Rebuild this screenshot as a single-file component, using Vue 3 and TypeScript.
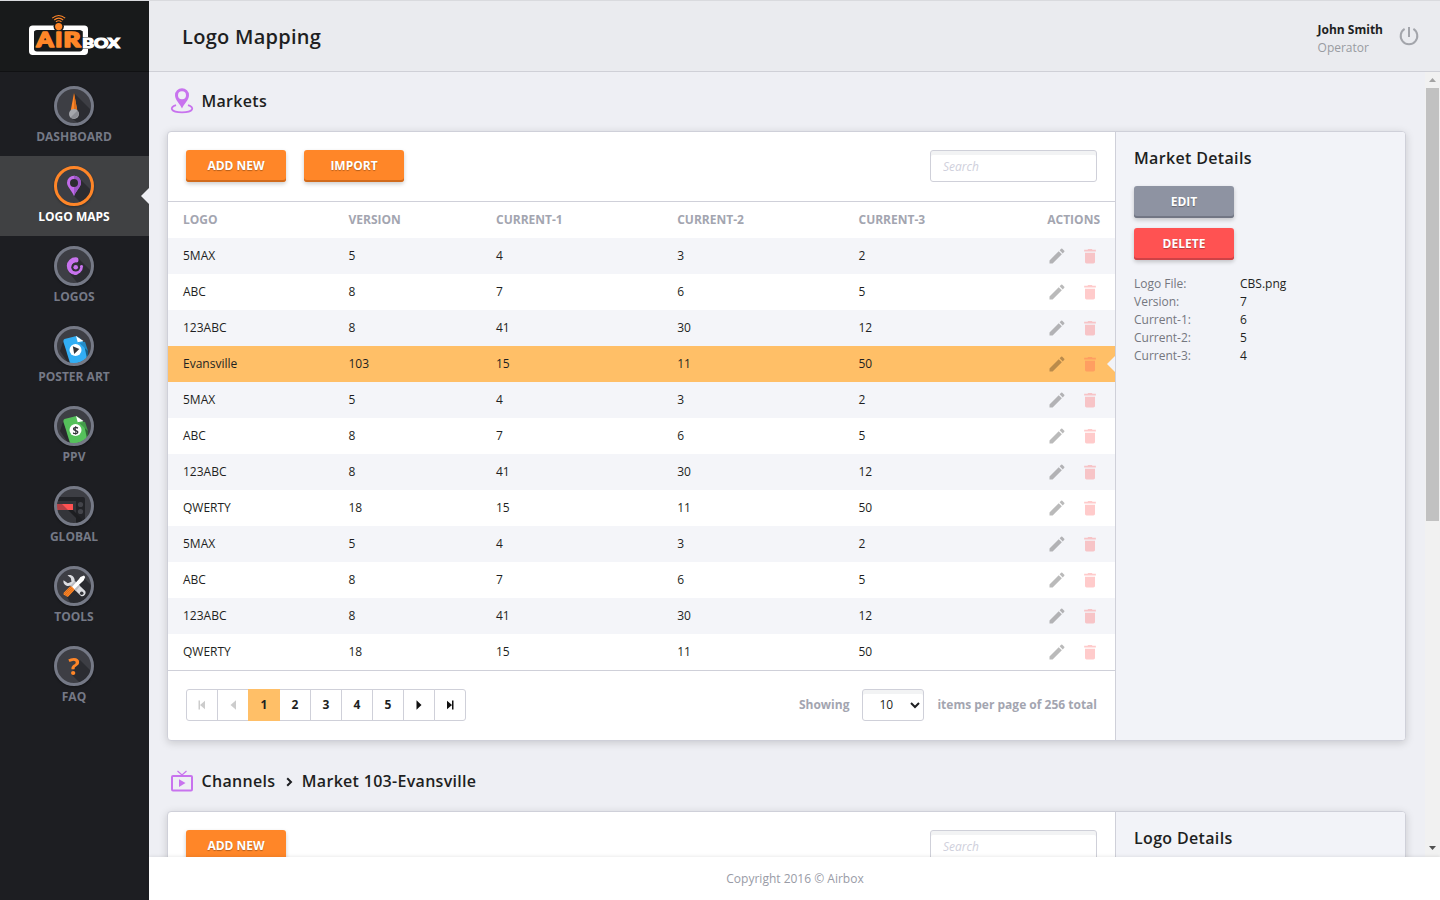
<script setup lang="ts">
import { ref } from 'vue'

interface NavItem { id: string; label: string }
interface Row { logo: string; version: number; c1: number; c2: number; c3: number }

const nav: NavItem[] = [
  { id: 'dashboard', label: 'DASHBOARD' },
  { id: 'maps', label: 'LOGO MAPS' },
  { id: 'logos', label: 'LOGOS' },
  { id: 'poster', label: 'POSTER ART' },
  { id: 'ppv', label: 'PPV' },
  { id: 'global', label: 'GLOBAL' },
  { id: 'tools', label: 'TOOLS' },
  { id: 'faq', label: 'FAQ' },
]
const active = ref('maps')

const max: Row = { logo: '5MAX', version: 5, c1: 4, c2: 3, c3: 2 }
const abc: Row = { logo: 'ABC', version: 8, c1: 7, c2: 6, c3: 5 }
const num: Row = { logo: '123ABC', version: 8, c1: 41, c2: 30, c3: 12 }
const evans: Row = { logo: 'Evansville', version: 103, c1: 15, c2: 11, c3: 50 }
const qwerty: Row = { logo: 'QWERTY', version: 18, c1: 15, c2: 11, c3: 50 }
const rows: Row[] = [max, abc, num, evans, max, abc, num, qwerty, max, abc, num, qwerty]
const selected = ref(3)
const page = ref(1)
const perPage = ref('10')

const details: [string, string][] = [
  ['Logo File:', 'CBS.png'],
  ['Version:', '7'],
  ['Current-1:', '6'],
  ['Current-2:', '5'],
  ['Current-3:', '4'],
]
</script>

<template>
  <div class="app">
    <aside class="sidebar">
      <div class="brand">
        <svg width="94" height="44" viewBox="0 0 94 44">
          <rect x="3.7" y="14.2" width="53.6" height="24" rx="1" fill="none" stroke="#fff" stroke-width="5.4" stroke-linejoin="round" />
          <rect x="6" y="16" width="48.5" height="21.5" rx="3" fill="#181a1b" />
          <circle cx="30.7" cy="12.6" r="5.2" fill="#181a1b" />
          <circle cx="30.7" cy="12.6" r="3.6" fill="#ff8628" />
          <path d="M24.2 4.2Q30.7 -1.2 37.2 4.2M26.2 6Q30.7 2.2 35.2 6M27.9 7.8Q30.7 5.8 33.5 7.8" fill="none" stroke="#ff8628" stroke-width="1.1" />
          <g class="logo-air">
            <text x="8.6" y="33.4" textLength="17" lengthAdjust="spacingAndGlyphs">A</text>
            <text x="27.2" y="33.4" textLength="7" lengthAdjust="spacingAndGlyphs">I</text>
            <text x="35.4" y="33.4" textLength="17" lengthAdjust="spacingAndGlyphs">R</text>
          </g>
          <rect x="54" y="23" width="7" height="12" fill="#181a1b" />
          <text class="logo-box" x="54.3" y="34" textLength="37.4" lengthAdjust="spacingAndGlyphs">BOX</text>
        </svg>
      </div>
      <nav class="nav">
        <a v-for="item in nav" :key="item.id" class="nav-item" :class="{ active: item.id === active }" @click="active = item.id">
          <svg class="nav-icon" width="40" height="40" viewBox="0 0 40 40">
            <defs><clipPath :id="'clip-' + item.id"><circle cx="20" cy="20" r="17.2" /></clipPath></defs>
            <circle cx="20" cy="20" r="18.5" fill="#3d3e44" />
            <g :clip-path="`url(#clip-${item.id})`">
              <template v-if="item.id === 'dashboard'">
                <path d="M20 7L40 27V40H28L16 31Z" fill="#2b2c31" />
                <path d="M20 7L23.2 24H16.8Z" fill="#ff8628" /><path d="M20 7L23.2 24H20Z" fill="#d96f1d" />
                <circle cx="20" cy="28" r="5" fill="#a5a7ac" /><path d="M16.5 31.5A5 5 0 0 0 23.5 24.5Z" fill="#8b8d93" />
              </template>
              <template v-else-if="item.id === 'maps'">
                <path d="M25 12L40 27V40H30L20 30Z" fill="#2b2c31" />
                <path d="M20 30C17.8 24.5 13 21 13 16.8A7 7 0 0 1 27 16.8C27 21 22.2 24.5 20 30Z" fill="#c26bea" />
                <path d="M20 30V9.8A7 7 0 0 1 27 16.8C27 21 22.2 24.5 20 30Z" fill="#9c56c8" />
                <circle cx="20" cy="17" r="4" fill="#2b2c31" />
              </template>
              <template v-else-if="item.id === 'logos'">
                <path d="M24 12L40 28V40H26L14.5 26Z" fill="#2b2c31" />
                <path d="M21.8 13.9A6.1 6.1 0 1 0 21.5 26.2" fill="none" stroke="#c873ee" stroke-width="5.4" stroke-linecap="round" />
                <path d="M20 28.8A8.6 8.6 0 0 0 29 20.4Q28.8 18.9 27.4 19L25.6 20L22 25.4Z" fill="#c873ee" />
                <circle cx="21.7" cy="21.2" r="4.4" fill="#303137" />
                <circle cx="21.7" cy="21.3" r="2.3" fill="#c873ee" />
              </template>
              <template v-else-if="item.id === 'poster' || item.id === 'ppv'">
                <path d="M9 16L6 25L14 37L18 36Z" fill="#292a2e" />
                <path d="M25 10L34 25V36H28Z" :fill="item.id === 'poster' ? '#175f84' : '#2f6735'" />
                <path d="M10.5 13L22.5 10L29.5 16L33.5 35C26 39 18 38 16 37L9.5 16Q9 13.5 10.5 13Z" :fill="item.id === 'poster' ? '#32aef4' : '#55c15b'" />
                <path d="M22 10.2L24.5 17L31 15.8L34 25L25.2 17Z" :fill="item.id === 'poster' ? '#238bc6' : '#43994a'" />
                <path d="M22 10L23.7 16.2L29.5 15Z" fill="#fff" />
                <circle cx="21.5" cy="24" r="6" fill="#fff" />
                <path v-if="item.id === 'poster'" d="M18.8 20.2L25.3 23L20.2 28Z" fill="#34353a" />
                <text v-else class="dollar" x="21.7" y="28" text-anchor="middle">$</text>
              </template>
              <template v-else-if="item.id === 'global'">
                <path d="M0 11H29Q31 11 31 13V40H0Z" fill="#222327" />
                <path d="M0 15H22V40H0Z" fill="#34353a" />
                <rect x="0" y="18" width="19" height="6" fill="#ff5252" />
                <path d="M0 18H8L14 24H0Z" fill="#b24045" />
                <path d="M14 24H19L28 33V40H22V32Z" fill="#1d1e21" />
                <circle cx="26.5" cy="18.5" r="2.6" fill="#43444a" /><circle cx="26.5" cy="25.5" r="2.6" fill="#43444a" />
              </template>
              <template v-else-if="item.id === 'tools'">
                <path d="M31 13L40 22V40H18L13 31Z" fill="#292a2f" />
                <path d="M9.5 14.2L13.8 17.3L17.5 15.8L16.8 12L13.5 9.3C17.3 7.8 21 10.8 20.7 15L31 24.8C33 27.5 29.7 31.7 26.7 29.7L16.4 19.5C12.5 21.2 8.7 18 9.5 14.2Z" fill="#dcdde1" />
                <path d="M16.4 19.5L20.7 15L26 20L22 25Z" fill="#bbbcc2" />
                <circle cx="27.7" cy="27.3" r="1.8" fill="#34353a" />
                <path d="M17.5 21.5L25 13L26.4 11L30 9.6L31.2 11L29.6 14.5L19.5 24Z" fill="#fff" />
                <path d="M16 20.5Q17 19.8 18 20.8L20 22.8Q20.8 23.8 20 24.6L13.8 31L9.5 28.5L9.7 26.8Z" fill="#ff8628" />
                <path d="M18.2 22L11.2 29M19.2 23.2L12.6 30M17 21L10.4 27.8" stroke="#b95d12" stroke-width=".6" />
              </template>
              <template v-else>
                <path d="M26 14L40 28V40H29L17 28Z" fill="#2b2c31" />
                <text class="question" x="20" y="28.8" text-anchor="middle">?</text>
              </template>
            </g>
            <circle class="ring" cx="20" cy="20" r="18.5" fill="none" stroke-width="3" />
          </svg>
          <span class="nav-label">{{ item.label }}</span>
        </a>
      </nav>
    </aside>

    <div class="page">
      <header class="header">
        <h1>Logo Mapping</h1>
        <div class="user">
          <div class="user-text"><b>John Smith</b><span>Operator</span></div>
          <svg width="20" height="20" viewBox="0 0 20 20" fill="none" stroke="#a3a5ab" stroke-width="2">
            <path d="M10 1V11M5.6 2.9A8.3 8.3 0 1 0 14.4 2.9" />
          </svg>
        </div>
      </header>

      <div class="body">
        <main class="content">
          <h2 class="section-title">
            <svg width="24" height="26" viewBox="0 0 24 26">
              <path d="M12 20.5C10.3 16 5 12 5 7.2A7 7 0 0 1 19 7.2C19 12 13.7 16 12 20.5Z" fill="#c873ee" />
              <circle cx="12" cy="7.3" r="4" fill="#eeeff4" />
              <path d="M6 17.2C-1 19.3 .4 24.3 12 24.3S25 19.3 18 17.2" fill="none" stroke="#c873ee" stroke-width="1.8" />
            </svg>
            <span>Markets</span>
          </h2>
          <section class="card">
            <div class="card-main">
              <div class="toolbar">
                <button class="btn orange">ADD NEW</button>
                <button class="btn orange">IMPORT</button>
                <input class="search" placeholder="Search" />
              </div>
              <div class="table">
                <div class="tr head">
                  <span>LOGO</span><span>VERSION</span><span>CURRENT-1</span><span>CURRENT-2</span><span>CURRENT-3</span><span class="last">ACTIONS</span>
                </div>
                <div v-for="(r, i) in rows" :key="i" class="tr" :class="{ odd: i % 2 === 0, selected: i === selected }" @click="selected = i">
                  <span>{{ r.logo }}</span><span>{{ r.version }}</span><span>{{ r.c1 }}</span><span>{{ r.c2 }}</span><span>{{ r.c3 }}</span>
                  <span class="actions">
                    <svg width="20" height="20" viewBox="0 0 24 24"><path class="pencil" d="M3 17.25V21h3.75L17.81 9.94l-3.75-3.75L3 17.25zM20.71 7.04a1 1 0 0 0 0-1.41l-2.34-2.34a1 1 0 0 0-1.41 0l-1.83 1.83 3.75 3.75 1.83-1.83z" /></svg>
                    <svg width="20" height="20" viewBox="0 0 24 24"><path class="trash" d="M6 19c0 1.1.9 2 2 2h8c1.1 0 2-.9 2-2V8H6v11zM19 4.5h-4l-.8-1H9.8l-.8 1H5v2h14z" /></svg>
                  </span>
                </div>
              </div>
              <div class="pager-bar">
                <div class="pager">
                  <button class="off"><svg width="8" height="10" viewBox="0 0 8 10"><path d="M.5 .5H2V9.5H.5ZM2 5L7 .7V9.3Z" /></svg></button>
                  <button class="off"><svg width="8" height="10" viewBox="0 0 8 10"><path d="M1.5 5L7 .3V9.7Z" /></svg></button>
                  <button v-for="n in 5" :key="n" :class="{ current: n === page }" @click="page = n">{{ n }}</button>
                  <button><svg width="8" height="10" viewBox="0 0 8 10"><path d="M6.5 5L1.5 .3V9.7Z" /></svg></button>
                  <button><svg width="8" height="10" viewBox="0 0 8 10"><path d="M6 .5H7.5V9.5H6ZM6 5L1 .7V9.3Z" /></svg></button>
                </div>
                <div class="showing">
                  <span>Showing</span>
                  <select v-model="perPage"><option>10</option><option>25</option></select>
                  <span>items per page of 256 total</span>
                </div>
              </div>
            </div>
            <aside class="card-side">
              <h3>Market Details</h3>
              <button class="btn grey">EDIT</button>
              <button class="btn red">DELETE</button>
              <dl>
                <div v-for="d in details" :key="d[0]"><dt>{{ d[0] }}</dt><dd>{{ d[1] }}</dd></div>
              </dl>
            </aside>
          </section>

          <h2 class="section-title second">
            <svg width="24" height="26" viewBox="0 0 24 26">
              <rect x="2" y="8" width="20" height="14.5" rx="1" fill="none" stroke="#c873ee" stroke-width="2" />
              <path d="M7.5 3L12 7L16.5 3" fill="none" stroke="#c873ee" stroke-width="1.2" />
              <path d="M9 11.2L15.5 15L9 19Z" fill="#c873ee" />
            </svg>
            <span>Channels</span>
            <svg class="chev" width="7" height="10" viewBox="0 0 7 10"><path d="M1.2 1.2L5 5L1.2 8.8" fill="none" stroke="#1e1f22" stroke-width="2" /></svg>
            <span>Market 103-Evansville</span>
          </h2>
          <section class="card tall">
            <div class="card-main">
              <div class="toolbar">
                <button class="btn orange">ADD NEW</button>
                <input class="search" placeholder="Search" />
              </div>
            </div>
            <aside class="card-side"><h3>Logo Details</h3></aside>
          </section>
        </main>
        <div class="scrollbar">
          <svg width="15" height="16" viewBox="0 0 15 16"><path d="M4 10L7.5 6L11 10Z" fill="#a3a3a3" /></svg>
          <div class="thumb"></div>
          <svg width="15" height="16" viewBox="0 0 15 16"><path d="M4 5L7.5 9L11 5Z" fill="#505050" /></svg>
        </div>
      </div>
      <footer class="footer">Copyright 2016 © Airbox</footer>
    </div>
  </div>
</template>

<style>
html, body { margin: 0; overflow: hidden; }
</style>

<style scoped>
* { box-sizing: border-box; }
.app { display: flex; width: 1440px; height: 900px; border-top: 1px solid #d9dade; background: #eeeff4; font-family: "Open Sans", "Noto Sans", sans-serif; font-size: 12px; color: #1e1f22; overflow: hidden; }
.sidebar { width: 149px; flex: none; background: #1d1e22; }
.brand { height: 71px; background: #181a1b; border-bottom: 1px solid #101113; padding: 13px 0 0 28px; }
.logo-air { font: 900 20px Lato, sans-serif; fill: #ff8628; stroke: #ff8628; stroke-width: 1.6px; stroke-linejoin: round; }
.logo-box { font: 900 13px Lato, sans-serif; fill: #fff; stroke: #fff; stroke-width: 1.1px; }
.nav { padding-top: 4px; }
.nav-item { position: relative; display: flex; flex-direction: column; align-items: center; height: 80px; padding-top: 10px; color: #757986; }
.nav-icon { flex: none; margin-right: 1px; filter: drop-shadow(0 1px 1px rgba(0, 0, 0, .35)); }
.ring { stroke: #757986; }
.nav-label { margin-top: 2px; font-weight: 700; line-height: 17px; margin-right: 1px; }
.nav-item.active { background: #404143; color: #fff; }
.active .ring { stroke: #ff8628; }
.nav-item.active::after { content: ""; position: absolute; right: 0; top: 32px; border: 8px solid transparent; border-right-color: #eeeff4; border-left: 0; }
.dollar { font: 700 11px "Open Sans", sans-serif; fill: #34353a; }
.question { font: 700 24px "Open Sans", sans-serif; fill: #ff8628; }
.page { flex: 1; min-width: 0; display: flex; flex-direction: column; }
.header { height: 71px; flex: none; display: flex; justify-content: space-between; background: #eaebef; border-bottom: 1px solid #cfd0d7; padding: 0 21px 0 33px; }
h1 { margin: 22px 0 0; font-size: 20px; line-height: 27px; font-weight: 600; letter-spacing: .28px; }
.user { display: flex; gap: 16px; padding-top: 20px; }
.user svg { margin-top: 5px; }
.user-text { display: flex; flex-direction: column; line-height: 18px; }
.user-text span { color: #999ba1; }
.body { flex: 1; min-height: 0; display: flex; }
.content { flex: 1; min-width: 0; padding: 0 19px 0 18px; overflow: hidden; }
.section-title { display: flex; align-items: center; height: 26px; margin: 16px 0 17px 3px; font-size: 16px; font-weight: 600; letter-spacing: .3px; }
.section-title span { margin-left: 7.5px; }
.section-title .chev { margin: 2px 1.5px 0 10.5px; }
.section-title.second { margin-top: 27px; }
.card { display: flex; height: 610px; border: 1px solid #cfd0d9; border-radius: 4px; background: #fff; box-shadow: 0 2px 8px rgba(0, 0, 0, .16); overflow: hidden; }
.card-main { flex: 1; min-width: 0; }
.card-side { width: 290px; flex: none; border-left: 1px solid #cfd0d9; background: #f2f3f8; padding: 15px 18px; }
.toolbar { display: flex; gap: 18px; height: 70px; padding: 18px; border-bottom: 1px solid #cfd0d9; }
.btn { display: block; width: 100px; height: 32px; border: 0; border-radius: 3px; padding: 0 0 1px; font: 700 12px "Open Sans", sans-serif; color: #fff; text-shadow: 0 1px 1px rgba(0, 0, 0, .3); }
.orange { background: #ff8628; box-shadow: inset 0 -2px #d16b1d, 0 2px 4px rgba(0, 0, 0, .2); }
.grey { background: #8e93a2; box-shadow: inset 0 -2px #727684, 0 2px 4px rgba(0, 0, 0, .2); }
.red { background: #ff5252; box-shadow: inset 0 -2px #ce4246, 0 2px 4px rgba(0, 0, 0, .2); margin-top: 10px; }
.search { margin-left: auto; width: 167px; height: 32px; border: 1px solid #cfd0d9; border-radius: 3px; padding: 1px 12px; background: #fff; box-shadow: inset 0 4px #f2f3f4; font: 12px "Open Sans", sans-serif; }
.search::placeholder { color: #cfd0dc; font-style: italic; opacity: 1; }
.tr { position: relative; display: grid; grid-template-columns: 165.5px 147.5px 181.2px 181.3px 1fr auto; align-items: center; height: 36px; padding: 0 15px; }
.tr > span { line-height: 18px; }
.head { font-weight: 700; color: #a3a5b0; }
.odd { background: #f4f5f9; }
.selected { background: #ffbf67; }
.selected::after { content: ""; position: absolute; right: 0; top: 10px; border: 8px solid transparent; border-right-color: #f2f3f8; border-left: 0; }
.actions { display: flex; gap: 13px; margin-top: -1px; }
.actions svg { display: block; }
.pencil { fill: #000; opacity: .27; }
.trash { fill: #ff5252; opacity: .3; }
.pager-bar { display: flex; justify-content: space-between; height: 70px; border-top: 1px solid #cfd0d9; padding: 18px; }
.pager { display: flex; height: 32px; }
.pager button { width: 32px; margin-right: -1px; border: 1px solid #cfd0d9; padding: 0 0 2px; background: #fff; font: 700 12px "Open Sans", sans-serif; color: #1e1f22; }
.pager button:first-child { border-radius: 3px 0 0 3px; }
.pager button:last-child { border-radius: 0 3px 3px 0; margin-right: 0; }
.pager svg { display: block; margin: 2px auto 0; fill: #111; }
.pager .off svg { fill: #ccc; }
.pager .current { position: relative; background: #ffbf67; border-color: #ffbf67; }
.showing { display: flex; align-items: center; font-weight: 700; color: #a3a5b0; height: 32px; }
.showing span { margin-top: -2px; }
.showing select { width: 62px; height: 32px; margin: 0 13px 0 13px; border: 1px solid #cfd0d9; border-radius: 3px; padding: 0 0 1px 12px; background: #fff; box-shadow: inset 0 4px #f2f3f4; font: 12px "Open Sans", sans-serif; color: #1e1f22; }
h3 { margin: 0 0 17px; font-size: 16px; line-height: 22px; font-weight: 600; letter-spacing: .34px; }
dl { margin: 15px 0 0; }
dl div { display: flex; line-height: 18px; }
dt { width: 106px; color: #75777f; }
dd { margin: 0; }
.scrollbar { width: 15px; flex: none; display: flex; flex-direction: column; background: #f1f1f1; }
.scrollbar svg { display: block; }
.scrollbar svg:last-child { margin-top: auto; }
.thumb { width: 13px; height: 433px; margin-left: 1px; background: #c1c1c1; }
.footer { position: relative; height: 43px; flex: none; background: #fff; box-shadow: 0 -1px 3px rgba(0, 0, 0, .08); text-align: center; padding-left: 1px; line-height: 43px; color: #999ba6; }
</style>
